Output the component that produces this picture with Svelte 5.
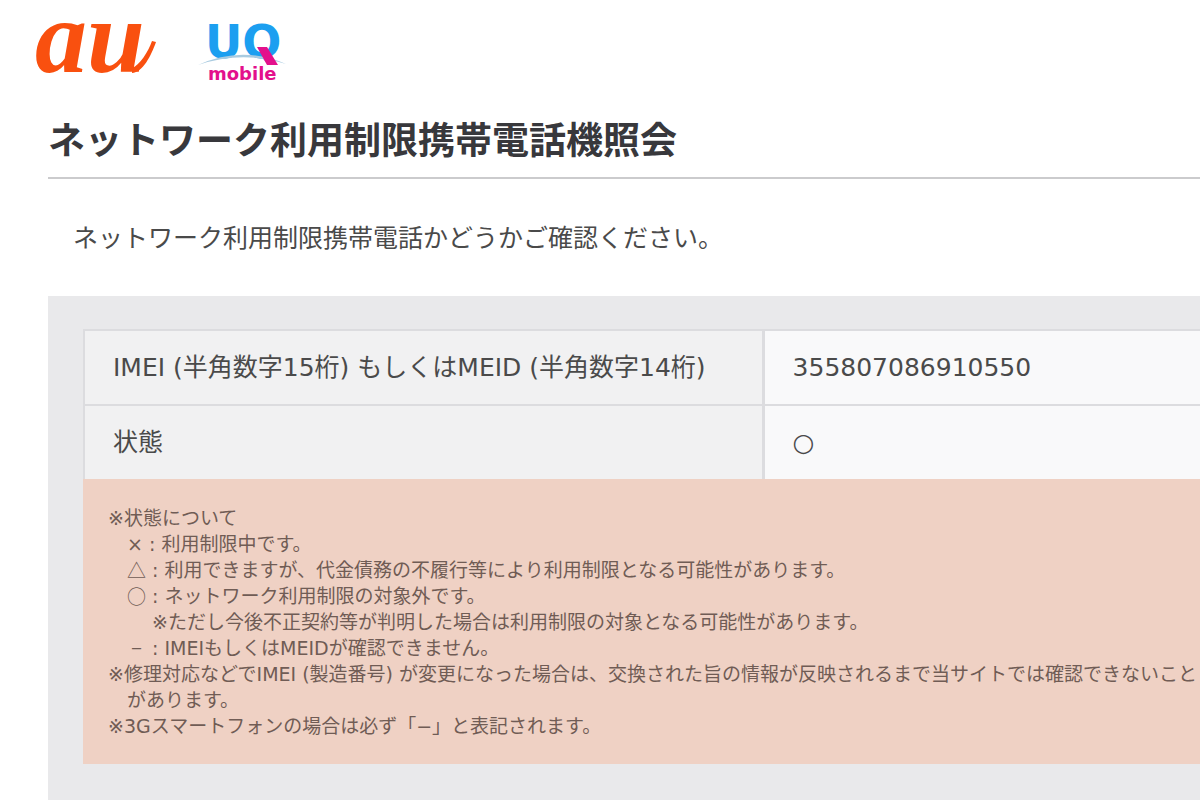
<script lang="ts">
	const imei = "355807086910550";
	const status = "○";
</script>

<header class="header">
	<svg class="logo logo-au" viewBox="0 0 128 60" role="img" aria-label="au">
		<text x="1" y="50" class="au-text">au</text>
		<path d="M98 46C106 43 114 30 118 19L122 20C117 34 109 50 98 51Z" class="au-tail" />
	</svg>
	<svg class="logo logo-uq" viewBox="0 0 92 66" role="img" aria-label="UQ mobile">
		<text x="7" y="36" class="uq-text">UQ</text>
		<path d="M0 43Q44 23 88 42Q44 28 0 43Z" class="uq-arc" />
		<path d="M59 25H69L80 43H69Z" class="uq-tail" />
		<text x="10" y="58" class="uq-mobile">mobile</text>
	</svg>
</header>

<main class="content">
	<h1>ネットワーク利用制限携帯電話機照会</h1>
	<p class="lead">ネットワーク利用制限携帯電話かどうかご確認ください。</p>

	<section class="panel">
		<table>
			<tbody>
				<tr>
					<th scope="row">IMEI (半角数字15桁) もしくはMEID (半角数字14桁)</th>
					<td>{imei}</td>
				</tr>
				<tr>
					<th scope="row">状態</th>
					<td>{status}</td>
				</tr>
			</tbody>
		</table>

		<div class="notes">
			<p>※状態について</p>
			<ul>
				<li>× : 利用制限中です。</li>
				<li>
					<span class="mark">△</span> : 利用できますが、代金債務の不履行等により利用制限となる可能性があります。
				</li>
				<li>
					<span class="mark">○</span> : ネットワーク利用制限の対象外です。
					<p class="sub">※ただし今後不正契約等が判明した場合は利用制限の対象となる可能性があります。</p>
				</li>
				<li><span class="mark">−</span> : IMEIもしくはMEIDが確認できません。</li>
			</ul>
			<p class="hang">
				※修理対応などでIMEI (製造番号) が変更になった場合は、交換された旨の情報が反映されるまで当サイトでは確認できないこと<br />があります。
			</p>
			<p>※3Gスマートフォンの場合は必ず「−」と表記されます。</p>
		</div>
	</section>
</main>

<style>
	:global(body) {
		overflow-x: hidden;
		background: #fff;
		color: #4a4a4a;
		font-family: "DejaVu Sans", "Noto Sans CJK JP", sans-serif;
	}

	.header {
		display: flex;
		gap: 36px;
		padding: 22px 34px 0;
	}
	.logo {
		overflow: visible;
	}
	.logo-au {
		width: 128px;
		height: 60px;
	}
	.logo-uq {
		width: 92px;
		height: 66px;
	}
	.au-text {
		fill: #f9500f;
		font: italic bold 104px "Liberation Serif", serif;
	}
	.au-tail {
		fill: #f9500f;
	}
	.uq-text {
		fill: #1c9ff0;
		font: bold 46px "DejaVu Sans", sans-serif;
	}
	.uq-arc {
		fill: #a9cbe0;
	}
	.uq-tail,
	.uq-mobile {
		fill: #e3108c;
	}
	.uq-mobile {
		font: bold 18px "DejaVu Sans", sans-serif;
	}

	.content {
		padding-left: 48px;
	}
	h1 {
		margin: 0;
		padding: 29px 0 10px;
		border-bottom: 2px solid #cbcbcd;
		color: #38383c;
		font-size: 37px;
		line-height: 50px;
	}
	.lead {
		margin: 41px 25px 38px;
		font-size: 25px;
		line-height: 38px;
	}

	.panel {
		padding: 33px 0 36px 35px;
		background: #e9e9eb;
	}
	table {
		width: 100%;
		border-spacing: 0;
		font-size: 25px;
		line-height: 38px;
	}
	th,
	td {
		box-sizing: border-box;
		height: 75px;
		padding: 0 28px;
		border-top: 2px solid #dcdcdf;
		font-weight: normal;
		text-align: left;
	}
	th {
		width: 1px;
		padding-right: 56px;
		border-left: 2px solid #dcdcdf;
		background: #f1f1f2;
		white-space: nowrap;
	}
	td {
		border-left: 3px solid #dcdcdf;
		background: #f9f9fa;
	}

	.notes {
		padding: 26px 0 25px 25px;
		background: #efd1c4;
		color: #705c55;
		font-size: 19px;
		line-height: 26px;
		white-space: nowrap;
	}
	.notes p,
	.notes ul {
		margin: 0;
	}
	.notes ul {
		padding-left: 19px;
		list-style: none;
	}
	.notes .sub {
		padding-left: 25px;
	}
	.notes .hang {
		padding-left: 19px;
		text-indent: -19px;
	}
	.mark {
		display: inline-block;
		width: 19px;
		height: 26px;
		font-family: "Noto Sans CJK JP", sans-serif;
		text-align: center;
		vertical-align: top;
	}
</style>
